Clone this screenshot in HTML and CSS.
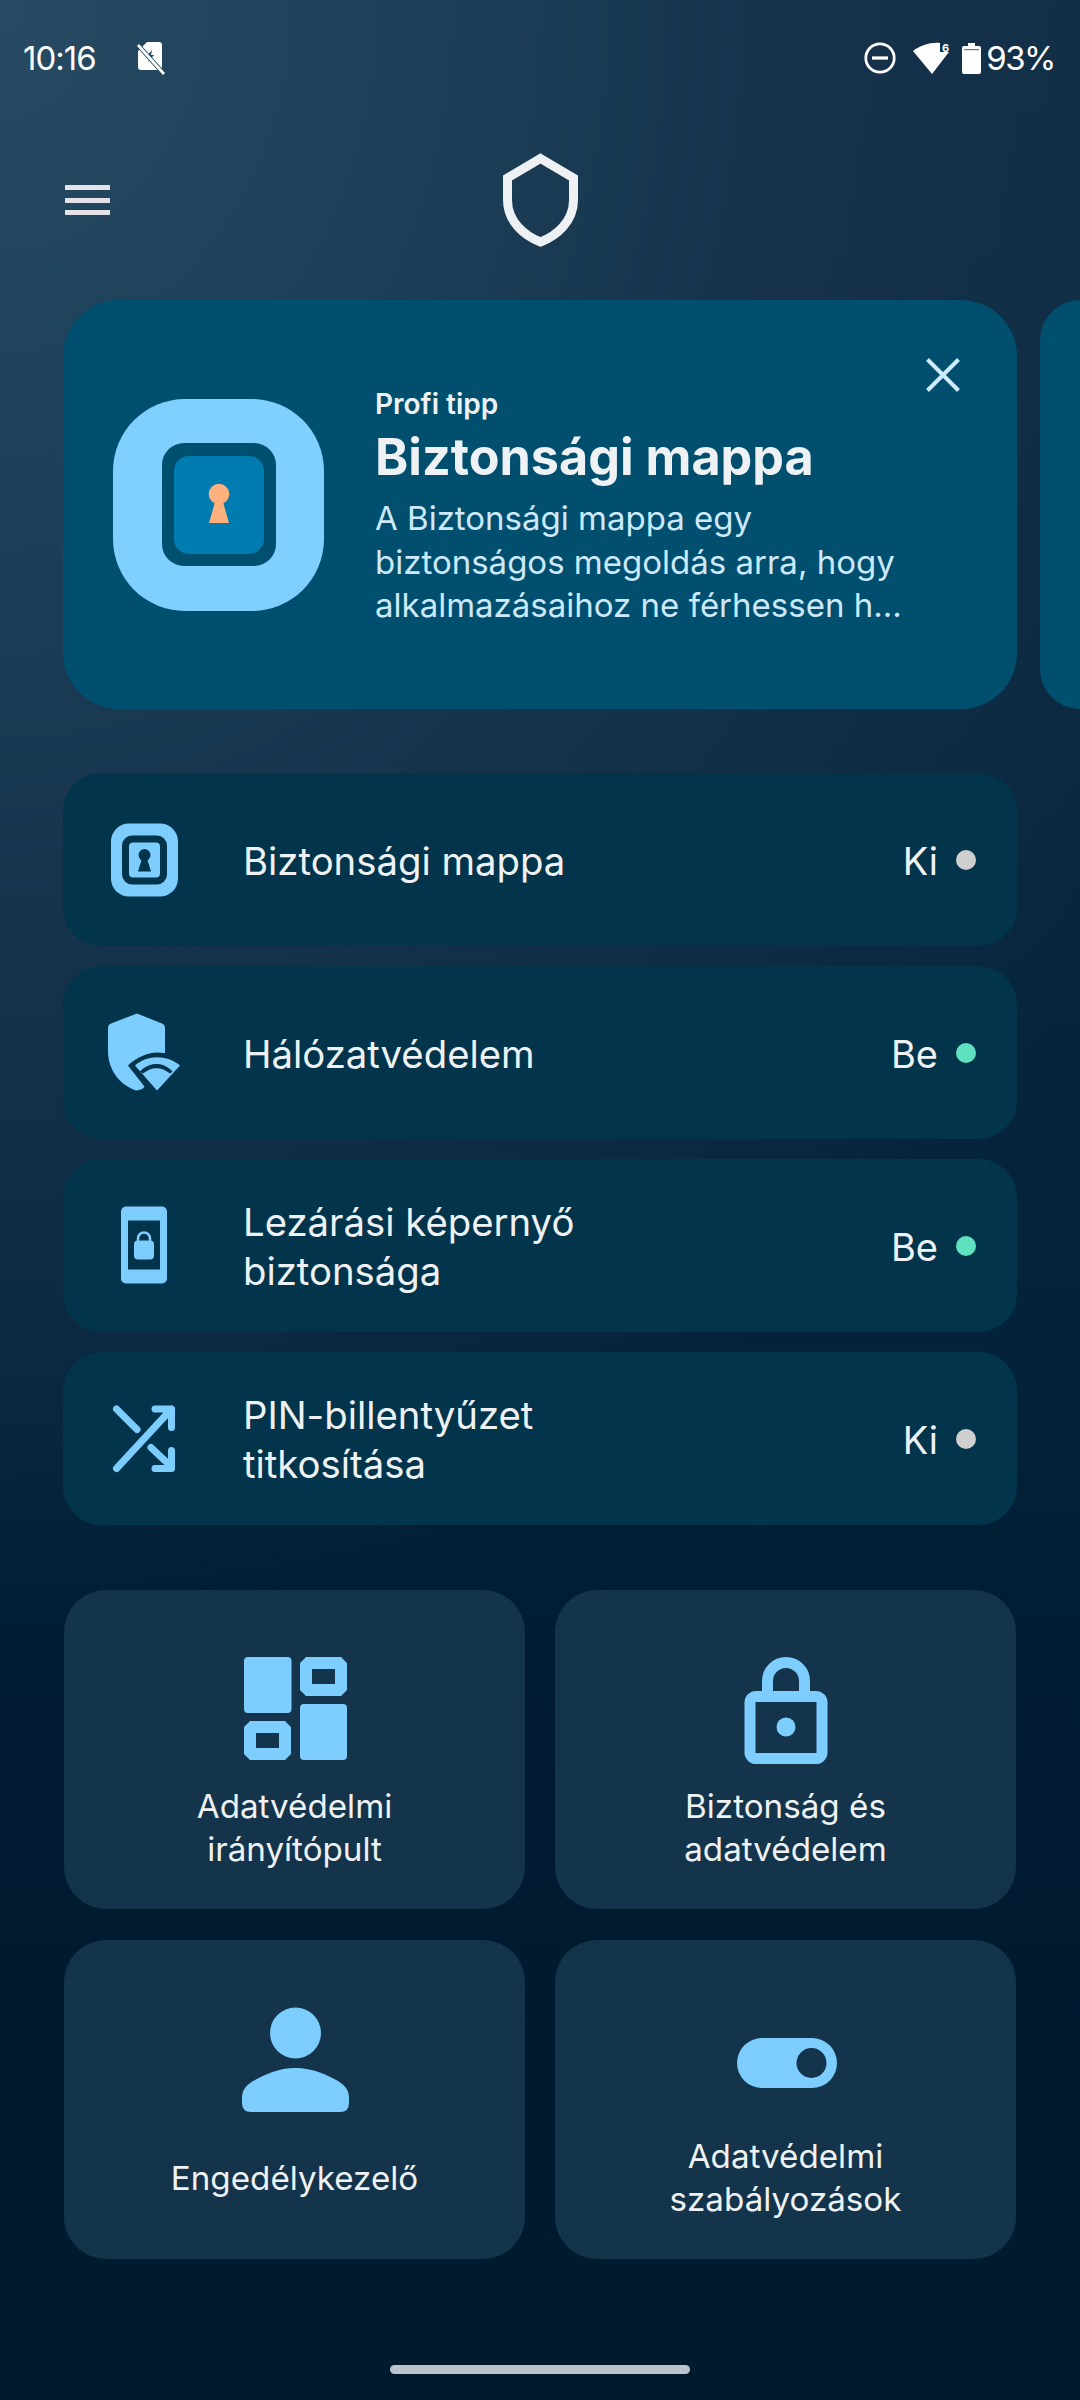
FILE: index.html
```html
<!DOCTYPE html>
<html lang="hu">
<head>
<meta charset="utf-8">
<title>Biztonság</title>
<link rel="stylesheet" href="styles.css">
</head>
<body>
<div class="status">
  <div class="status-left">
    <span class="time">10:16</span>
    <svg class="ic-saver" viewBox="136 40 28 34"><path d="M146 41H158a3 3 0 0 1 3 3V66a3 3 0 0 1-3 3H140a3 3 0 0 1-3-3V50Z" fill="#fff"/><path d="M151 49 145 56H149L147 61 153 54H150Z" fill="#1f4660"/><path d="M137 44 163 73" stroke="#1f4660" stroke-width="4.500"/><path d="M137 44 163 73" stroke="#fff" stroke-width="2.800"/></svg>
  </div>
  <div class="status-right">
    <svg class="ic-dnd" viewBox="0 0 32 32"><circle cx="16" cy="16" r="14.2" fill="none" stroke="#fff" stroke-width="2.8"/><rect x="8" y="14.4" width="16" height="3.2" fill="#fff"/></svg>
    <svg class="ic-wifi" viewBox="914 36 40 40"><path d="M914 49C922 43 932 40 941 41V50H950L933 72Z" fill="#fff"/><text x="943" y="50" class="wifi-six">6</text></svg>
    <svg class="ic-batt" viewBox="963 41 19 31"><path d="M969 41H976V44H980a2 2 0 0 1 2 2V70a2 2 0 0 1-2 2H965a2 2 0 0 1-2-2V46a2 2 0 0 1 2-2H969Z" fill="#fff"/><rect x="965" y="47" width="15" height="1.2" fill="#5f7c90"/></svg>
    <span class="pct">93%</span>
  </div>
</div>

<header class="top">
  <div class="menu"><span></span><span></span><span></span></div>
  <svg class="logo" viewBox="500 150 81 100"><path d="M540.5 158.5 573.5 178V200C573.5 222 556 236 540.5 242 525 236 507.5 222 507.5 200V178Z" fill="none" stroke="#edf1f3" stroke-width="9"/></svg>
  <div></div>
</header>

<section class="carousel">
  <article class="tip">
    <svg class="tip-art" viewBox="113 399 211 212">
      <rect x="113" y="399" width="211" height="212" rx="72" fill="#7fd0ff"/>
      <rect x="162" y="443" width="114" height="123" rx="22" fill="#004f6f"/>
      <rect x="174" y="456" width="90" height="98" rx="15" fill="#007cb0"/>
      <circle cx="219" cy="494" r="10.3" fill="#ffb07c"/>
      <path d="M215 502H223L229 523H209Z" fill="#ffb07c"/>
    </svg>
    <div class="tip-text">
      <div class="tip-kicker">Profi tipp</div>
      <div class="tip-title">Biztonsági mappa</div>
      <div class="tip-desc">A Biztonsági mappa egy<br>biztonságos megoldás arra, hogy<br>alkalmazásaihoz ne férhessen h...</div>
    </div>
    <svg class="tip-close" viewBox="0 0 34 34"><path d="M1.5 1.5 32.5 32.5M32.5 1.5 1.5 32.5" stroke="#cfeaff" stroke-width="4" fill="none"/></svg>
  </article>
  <div class="tip-next"></div>
</section>

<section class="rows">
  <div class="row">
    <svg class="row-ic" viewBox="99 814.5 90 90">
      <rect x="111" y="823" width="67" height="73" rx="18" fill="#7dceff"/>
      <rect x="122" y="835" width="45" height="49" rx="10" fill="#02344c"/>
      <rect x="129" y="842" width="31" height="35" rx="4" fill="#7dceff"/>
      <circle cx="144.5" cy="854.500" r="6" fill="#02344c"/>
      <path d="M142 858H147L151 871H138Z" fill="#02344c"/>
    </svg>
    <span class="row-label">Biztonsági mappa</span>
    <span class="row-state">Ki</span><span class="dot dot-off"></span>
  </div>
  <div class="row">
    <svg class="row-ic" viewBox="99 1007.500 90 90">
      <path d="M137 1013 162 1023Q165 1024 165 1028V1060L143 1088Q139 1090 136 1090C122 1085 108 1072 108 1050V1028Q108 1024 111 1023Z" fill="#7dceff"/>
      <path d="M128 1065C137 1056 149 1052 157 1052 166 1052 176 1055 184 1062L157 1095 146 1088Z" fill="#02344c"/>
      <path d="M135 1065C147 1054 167 1054 180 1065L157 1090Z" fill="#7dceff"/>
      <path d="M140 1071C149 1061 164 1061 172.500 1071L170 1073C161 1066 152 1066 143 1073Z" fill="#02344c"/>
    </svg>
    <span class="row-label">Hálózatvédelem</span>
    <span class="row-state">Be</span><span class="dot dot-on"></span>
  </div>
  <div class="row">
    <svg class="row-ic" viewBox="99 1200.500 90 90">
      <rect x="121" y="1206" width="46" height="77" rx="5" fill="#7dceff"/>
      <rect x="128" y="1220" width="32" height="49" fill="#02344c"/>
      <rect x="134" y="1240" width="20" height="19" rx="4" fill="#7dceff"/>
      <path d="M138 1241V1238a6 6 0 0 1 12 0V1241" fill="none" stroke="#7dceff" stroke-width="2.500"/>
    </svg>
    <span class="row-label">Lezárási képernyő<br>biztonsága</span>
    <span class="row-state">Be</span><span class="dot dot-on"></span>
  </div>
  <div class="row">
    <svg class="row-ic" viewBox="99 1393.500 90 90">
      <path d="M116.500 1408.500 137 1429M116.500 1468 171.500 1408.500M155 1408.500H171.500V1427M151 1447 171 1466M155 1468H171.500V1450" fill="none" stroke="#7dceff" stroke-width="7" stroke-linecap="round" stroke-linejoin="round"/>
    </svg>
    <span class="row-label">PIN-billentyűzet<br>titkosítása</span>
    <span class="row-state">Ki</span><span class="dot dot-off"></span>
  </div>
</section>

<section class="tiles">
  <div class="tile">
    <svg class="tile-ic" viewBox="235 1650 120 120">
      <rect x="244" y="1657" width="47.500" height="56" rx="4" fill="#7dceff"/>
      <path d="M306 1657H341L347 1663V1690L341 1696H306L300 1690V1663ZM312 1669V1684H335V1669Z" fill="#7dceff" fill-rule="evenodd"/>
      <rect x="300" y="1704" width="47" height="56" rx="4" fill="#7dceff"/>
      <path d="M250 1721H285L291 1727V1754L285 1760H250L244 1754V1727ZM256 1733V1748H279V1733Z" fill="#7dceff" fill-rule="evenodd"/>
    </svg>
    <div class="tile-label">Adatvédelmi<br>irányítópult</div>
  </div>
  <div class="tile">
    <svg class="tile-ic" viewBox="725 1650 120 120">
      <path d="M766.500 1696V1681a18.500 18.500 0 0 1 37 0V1696" fill="none" stroke="#7dceff" stroke-width="11"/>
      <rect x="749" y="1696.500" width="72" height="62" rx="6" fill="none" stroke="#7dceff" stroke-width="11"/>
      <circle cx="785" cy="1727" r="9.500" fill="#7dceff"/>
    </svg>
    <div class="tile-label">Biztonság és<br>adatvédelem</div>
  </div>
  <div class="tile">
    <svg class="tile-ic" viewBox="235 1999 120 120">
      <circle cx="295.500" cy="2032" r="25.500" fill="#7dceff"/>
      <path d="M295.500 2067C313 2067 327 2074 338 2080 346 2085 349 2090 349 2097V2102Q349 2111 340 2111H251Q242 2111 242 2102V2097C242 2090 245 2085 253 2080 264 2074 278 2067 295.500 2067Z" fill="#7dceff"/>
    </svg>
    <div class="tile-label tile-label-one">Engedélykezelő</div>
  </div>
  <div class="tile">
    <svg class="tile-ic" viewBox="725 1999 120 120">
      <path d="M761 2037H811a25 25 0 0 1 0 50H761a25 25 0 0 1 0-50ZM810.500 2047a15 15 0 1 0 0 30 15 15 0 0 0 0-30Z" fill="#7dceff" fill-rule="evenodd"/>
    </svg>
    <div class="tile-label">Adatvédelmi<br>szabályozások</div>
  </div>
</section>

<div class="home"></div>
</body>
</html>
```

FILE: styles.css
```css
* { box-sizing: border-box; }
html, body { margin: 0; padding: 0; }
body {
  width: 1080px;
  height: 2400px;
  overflow: hidden;
  font-family: "Inter", "Liberation Sans", sans-serif;
  color: #eef2f4;
  background:
    radial-gradient(125% 68% at 0 0, #274b63 0%, #1d3f58 32%, #15324a 60%, rgba(10,36,56,0) 100%),
    linear-gradient(180deg, #0e2c44 0%, #04233a 55%, #001c32 70%, #001a2e 100%);
}

.status { height: 114px; padding: 2px 25px 0 23px; display: flex; justify-content: space-between; align-items: center; color: #fff; }
.status-left { display: flex; align-items: center; gap: 40px; }
.status-right { display: flex; align-items: center; }
.time { font-size: 33px; width: 73px; letter-spacing: -1px; }
.ic-saver { width: 28px; height: 34px; margin-left: 1px; }
.ic-dnd { width: 32px; height: 32px; }
.ic-wifi { width: 40px; height: 40px; margin-left: 17px; }
.wifi-six { font-size: 11px; font-weight: 700; fill: #fff; }
.ic-batt { width: 19px; height: 31px; margin-left: 9px; }
.pct { font-size: 33px; margin-left: 5px; letter-spacing: -1.500px; }

.top { height: 186px; padding: 0 65px 14px; display: grid; grid-template-columns: 1fr 81px 1fr; align-items: center; }
.menu { width: 45px; display: flex; flex-direction: column; gap: 7.500px; }
.menu span { display: block; height: 5px; background: #e4e2e8; }
.logo { width: 81px; height: 100px; }

.carousel { display: flex; gap: 23px; padding-left: 63px; width: 1080px; }
.tip { width: 954px; height: 409px; flex: none; background: #004f6f; border-radius: 56px; padding: 0 0 0 50px; display: flex; align-items: center; position: relative; }
.tip-next { width: 40px; height: 409px; flex: none; background: #004f6f; border-radius: 56px 0 0 56px; }
.tip-art { width: 211px; height: 212px; flex: none; }
.tip-text { margin: 6px 0 0 51px; white-space: nowrap; }
.tip-kicker { font-size: 28px; font-weight: 600; line-height: 34px; }
.tip-title { font-size: 50.300px; font-weight: 700; line-height: 64px; margin-top: 4px; }
.tip-desc { font-size: 33px; line-height: 43.500px; margin-top: 8px; color: #cde9fc; }
.tip-close { position: absolute; top: 58px; right: 57px; width: 34px; height: 34px; }

.rows { margin: 64px 0 0 63px; width: 954px; display: flex; flex-direction: column; gap: 20px; }
.row { height: 173px; background: #02344c; border-radius: 38px; display: flex; align-items: center; padding: 0 41px 0 36px; }
.row-ic { width: 90px; height: 90px; flex: none; }
.row-label { flex: 1; margin-left: 54px; padding-top: 3px; font-size: 38.300px; line-height: 49px; }
.row-state { font-size: 38px; padding-top: 3px; }
.dot { width: 20px; height: 20px; border-radius: 50%; margin-left: 18px; }
.dot-off { background: #cfcfcf; }
.dot-on { background: #5fe0bf; }

.tiles { margin: 65px 0 0 64px; width: 952px; display: grid; grid-template-columns: 461px 461px; column-gap: 30px; row-gap: 31px; }
.tile { height: 319px; background: #14344b; border-radius: 42px; padding-top: 60px; display: flex; flex-direction: column; align-items: center; }
.tile-ic { width: 120px; height: 120px; flex: none; }
.tile-label { margin-top: 15px; height: 86px; font-size: 33.200px; line-height: 43px; text-align: center; }
.tile-label-one { line-height: 86px; }

.home { width: 300px; height: 9px; margin: 106px 0 0 390px; background: #b9c4cc; border-radius: 5px; }
```
